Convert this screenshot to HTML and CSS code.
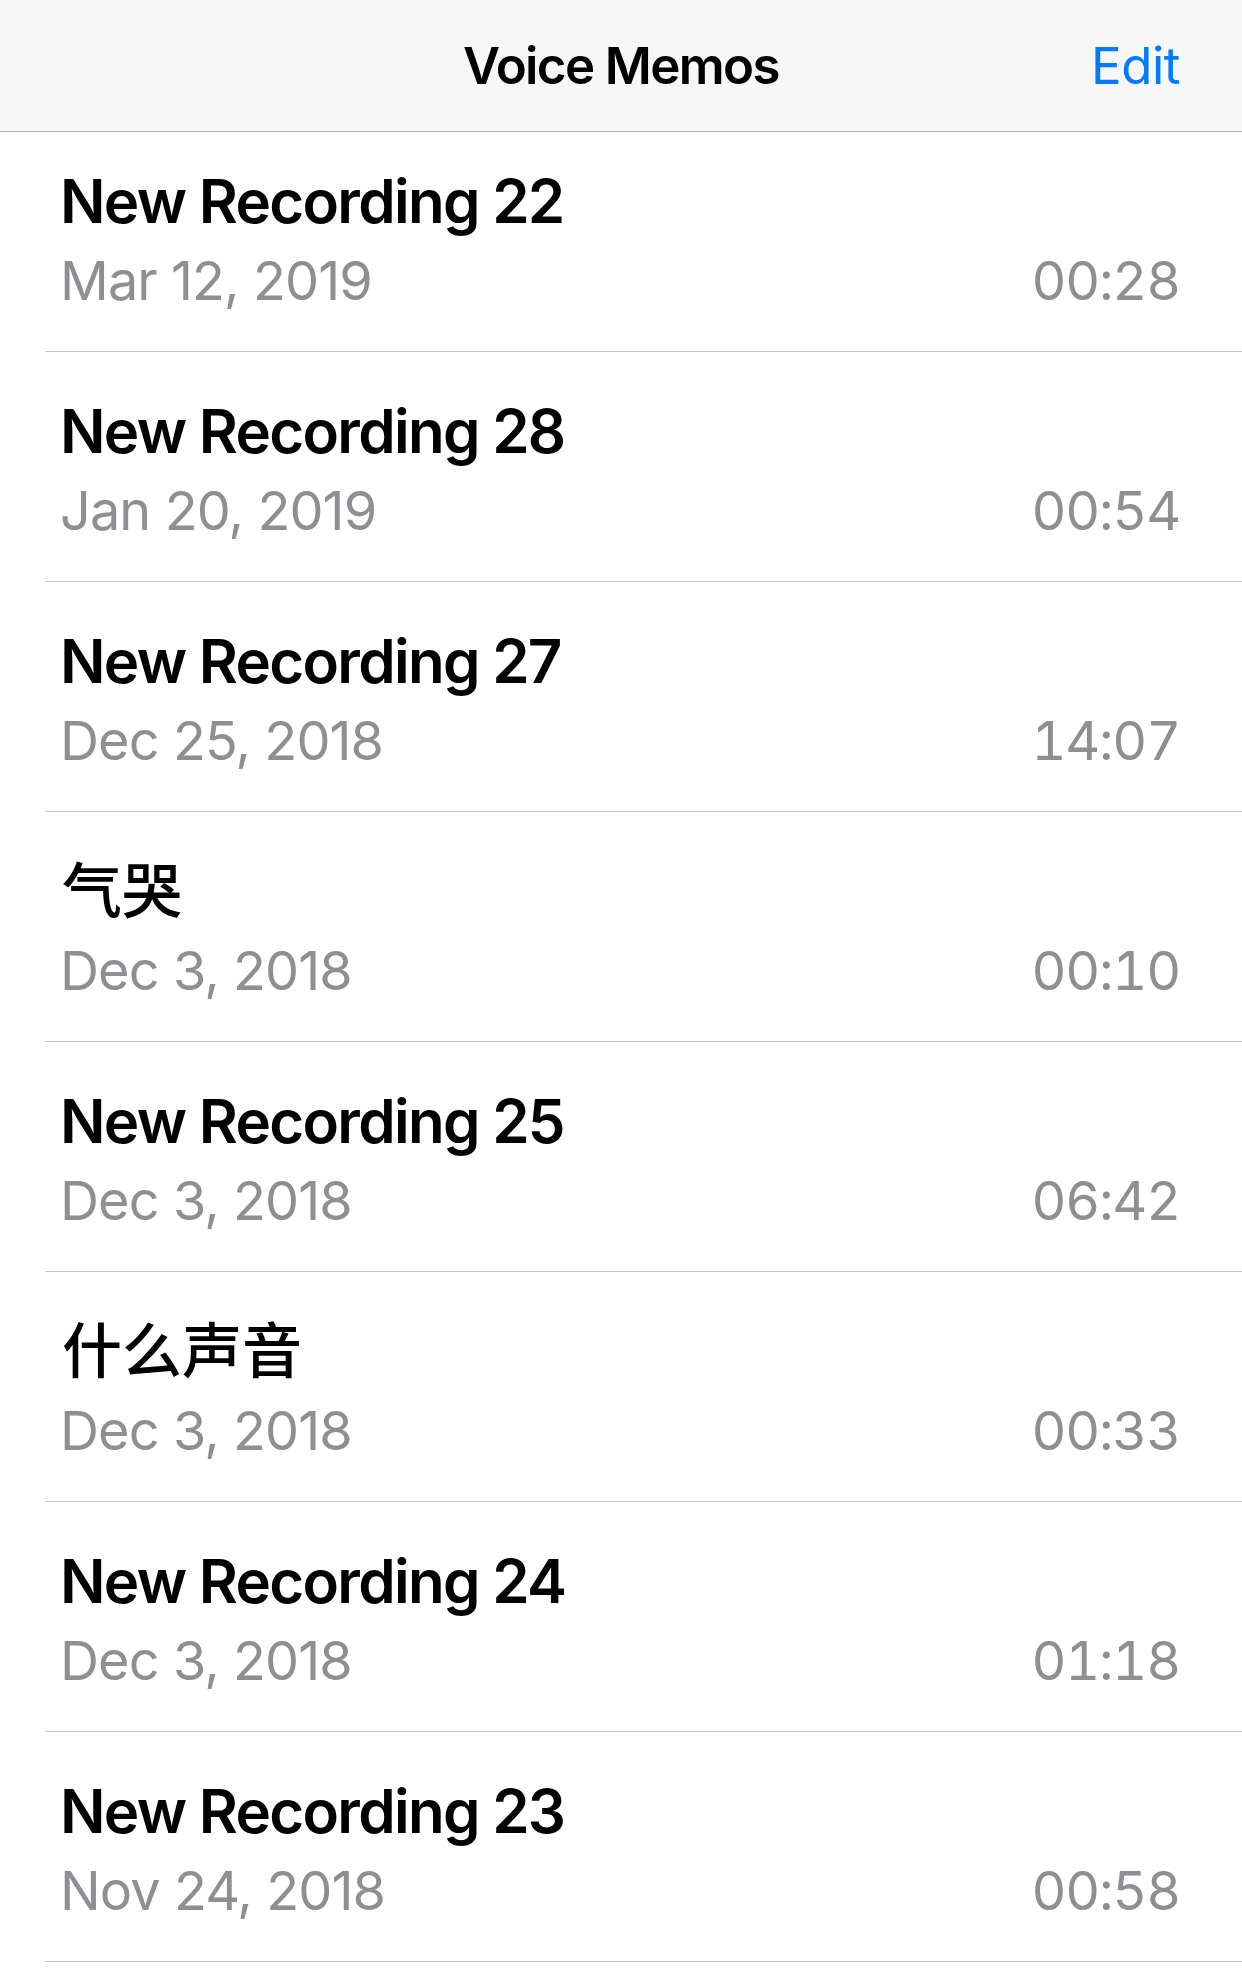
FILE: index.html
```html
<!DOCTYPE html>
<html lang="en">
<head>
<meta charset="utf-8">
<title>Voice Memos</title>
<link rel="stylesheet" href="styles.css">
</head>
<body>
<header class="navbar">
  <span class="nav-spacer"></span>
  <h1 class="nav-title">Voice Memos</h1>
  <a class="nav-edit">Edit</a>
</header>
<ul class="memo-list">
  <li class="memo"><div class="memo-title">New Recording 22</div><div class="memo-meta"><span class="memo-date">Mar 12, 2019</span><span class="memo-dur">00:28</span></div></li>
  <li class="memo"><div class="memo-title">New Recording 28</div><div class="memo-meta"><span class="memo-date">Jan 20, 2019</span><span class="memo-dur">00:54</span></div></li>
  <li class="memo"><div class="memo-title">New Recording 27</div><div class="memo-meta"><span class="memo-date">Dec 25, 2018</span><span class="memo-dur">14:07</span></div></li>
  <li class="memo"><div class="memo-title memo-title-cjk" lang="zh-CN">气哭</div><div class="memo-meta"><span class="memo-date">Dec 3, 2018</span><span class="memo-dur">00:10</span></div></li>
  <li class="memo"><div class="memo-title">New Recording 25</div><div class="memo-meta"><span class="memo-date">Dec 3, 2018</span><span class="memo-dur">06:42</span></div></li>
  <li class="memo"><div class="memo-title memo-title-cjk" lang="zh-CN">什么声音</div><div class="memo-meta"><span class="memo-date">Dec 3, 2018</span><span class="memo-dur">00:33</span></div></li>
  <li class="memo"><div class="memo-title">New Recording 24</div><div class="memo-meta"><span class="memo-date">Dec 3, 2018</span><span class="memo-dur">01:18</span></div></li>
  <li class="memo"><div class="memo-title">New Recording 23</div><div class="memo-meta"><span class="memo-date">Nov 24, 2018</span><span class="memo-dur">00:58</span></div></li>
</ul>
</body>
</html>
```

FILE: styles.css
```css
html, body {
  margin: 0;
  padding: 0;
  background: #ffffff;
}
body {
  font-family: Inter, "Noto Sans CJK SC", sans-serif;
  color: #000;
  width: 1242px;
  height: 1977px;
  overflow: hidden;
}
.navbar {
  height: 131px;
  background: #f7f7f7;
  border-bottom: 1px solid #b2b2b2;
  display: grid;
  grid-template-columns: 1fr auto 1fr;
  align-items: center;
  padding: 0 62px;
}
.nav-title {
  margin: 0;
  font-size: 51px;
  font-weight: 600;
  letter-spacing: -1.6px;
}
.nav-edit {
  justify-self: end;
  color: #007aff;
  font-size: 51px;
  font-weight: 400;
  letter-spacing: -0.5px;
}
.memo-list {
  list-style: none;
  margin: 0;
  padding: 0;
}
.memo {
  box-sizing: border-box;
  height: 230px;
  margin-left: 45px;
  padding: 43px 62px 0 15px;
  border-bottom: 1px solid #c8c7cc;
}
.memo:first-child {
  height: 220px;
  padding-top: 33px;
}
.memo-title {
  font-size: 60px;
  line-height: 72px;
  font-weight: 600;
  letter-spacing: -1.7px;
}
.memo-title-cjk {
  font-weight: 500;
  letter-spacing: 0;
  padding-left: 2px;
}
.memo-meta {
  display: flex;
  justify-content: space-between;
  margin-top: 8px;
  font-size: 54px;
  line-height: 72px;
  color: #8e8e93;
  letter-spacing: -0.9px;
}
.memo-dur {
  font-variant-numeric: tabular-nums;
  letter-spacing: -1.2px;
}
```
